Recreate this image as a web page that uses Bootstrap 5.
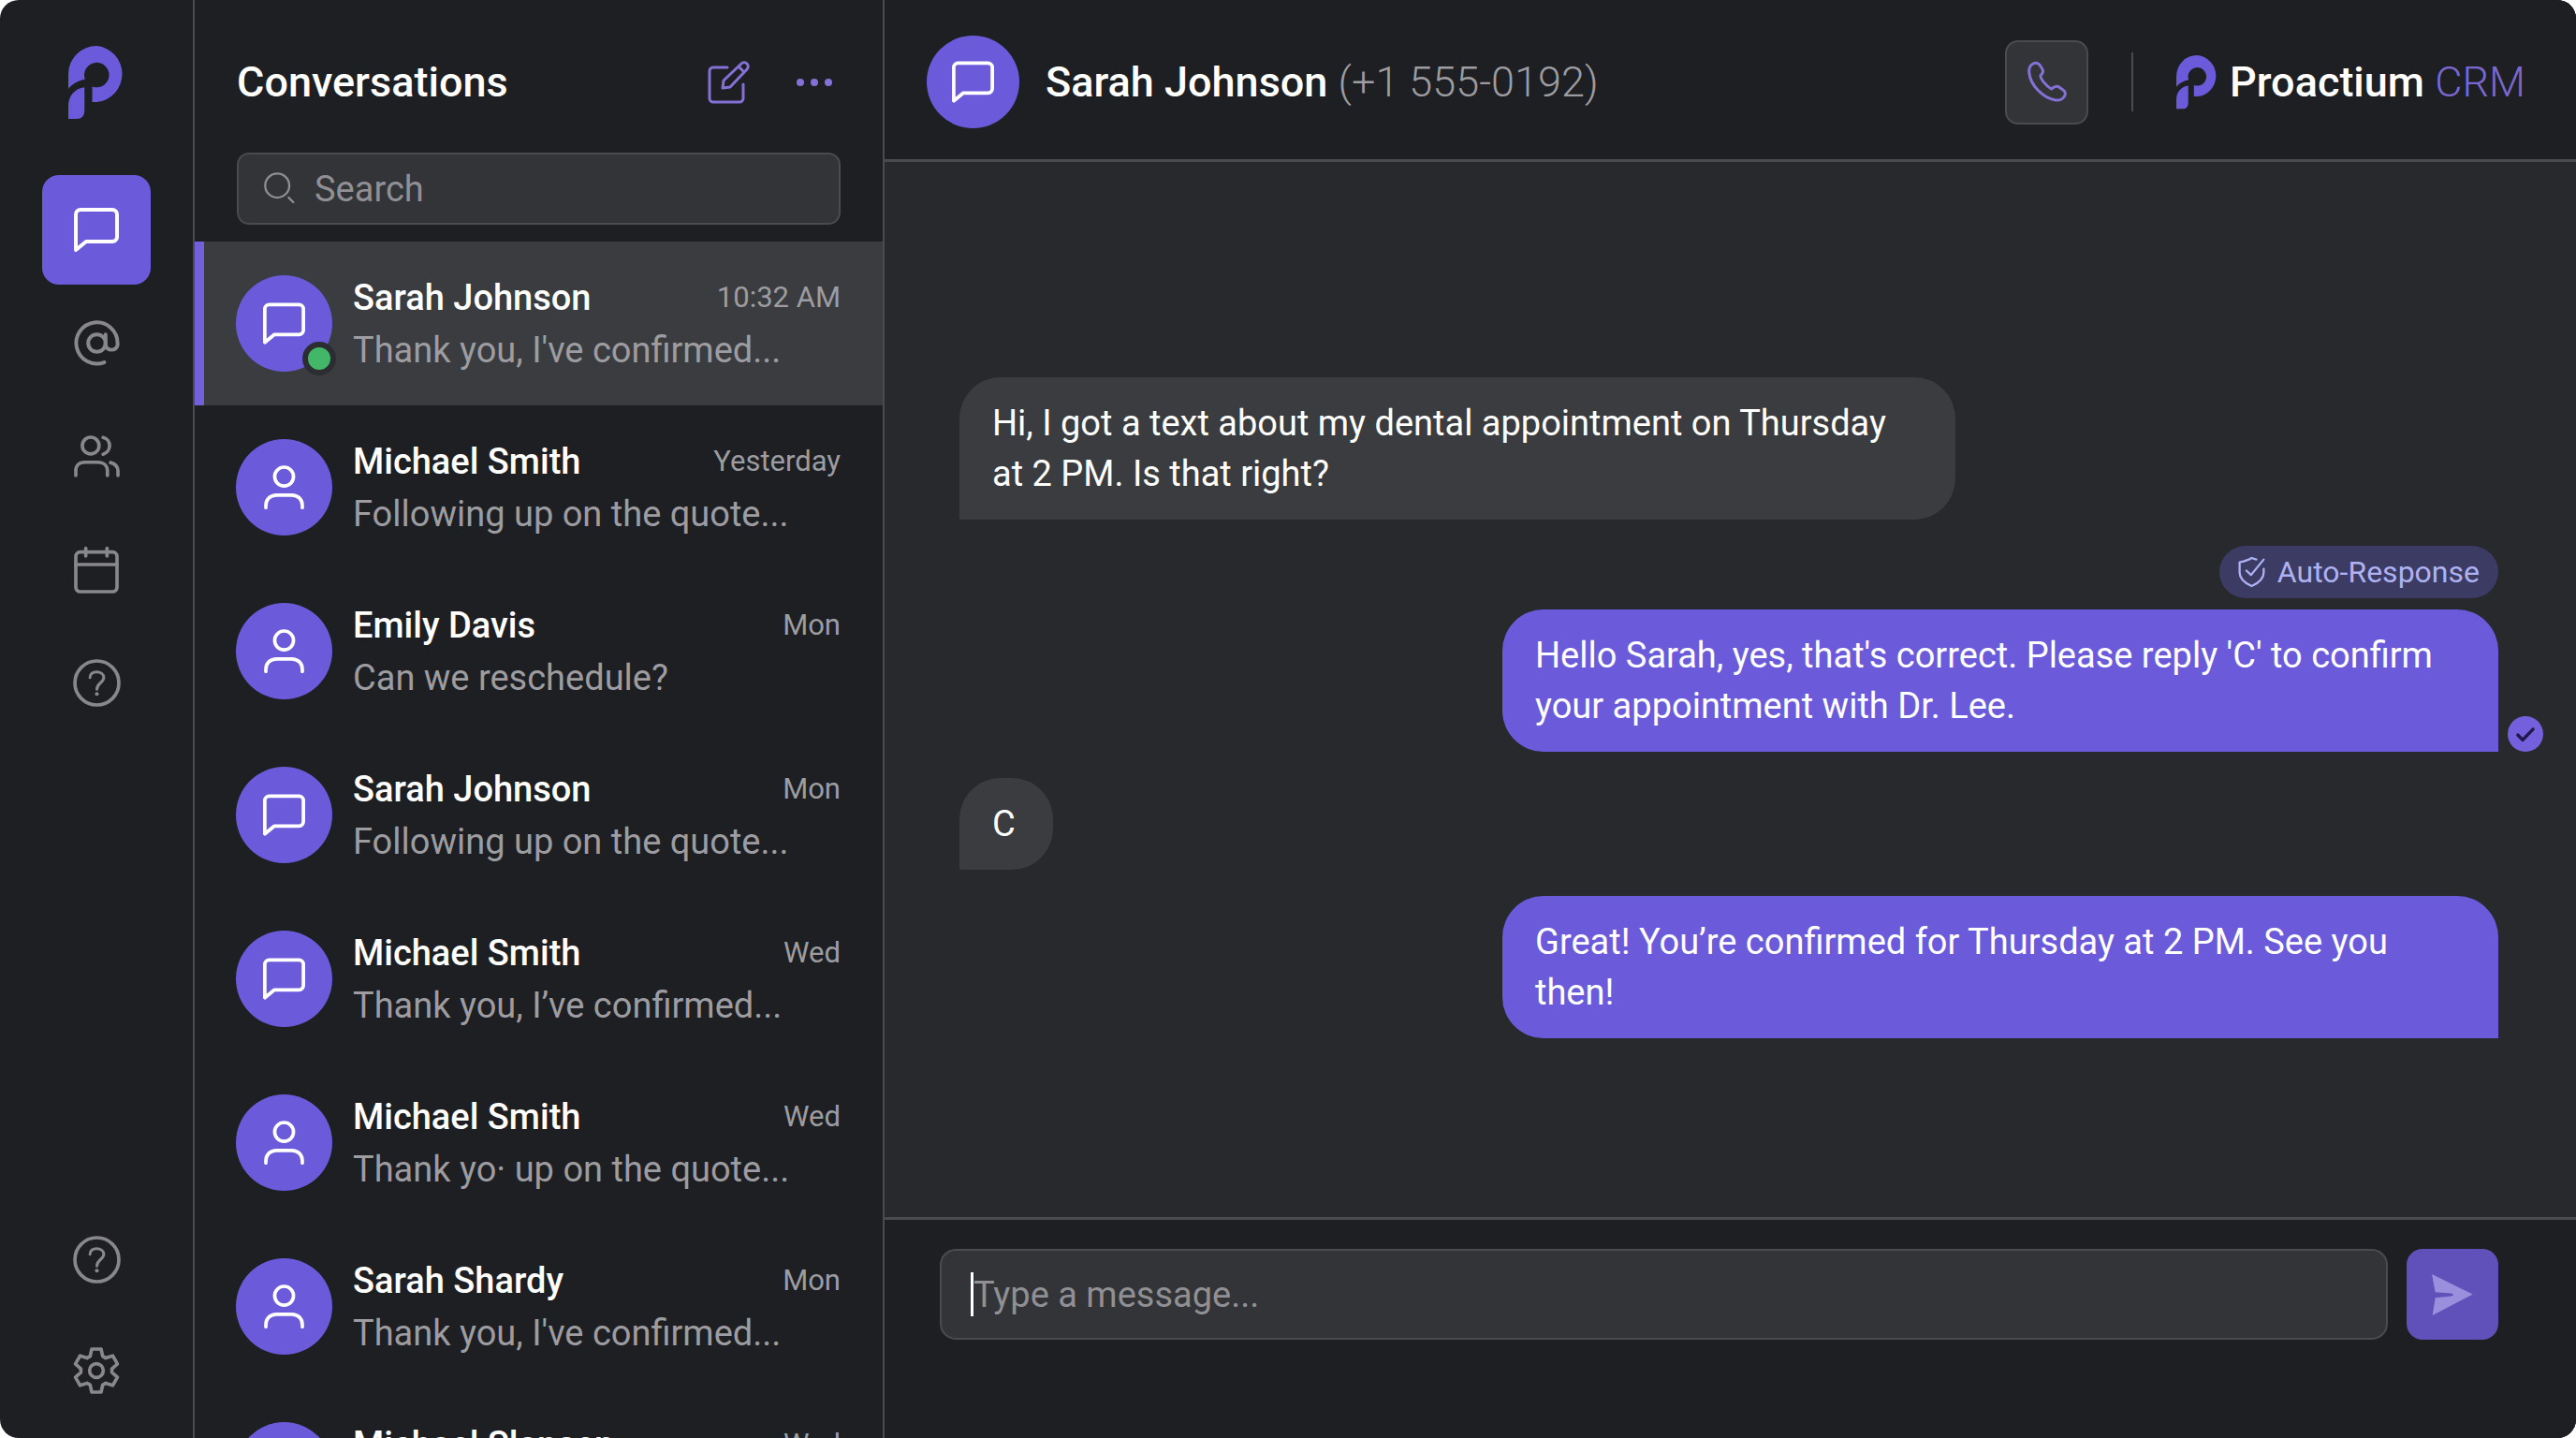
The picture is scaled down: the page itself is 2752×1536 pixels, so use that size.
<!DOCTYPE html>
<html lang="en" data-bs-theme="dark">
<head>
<meta charset="utf-8">
<meta name="viewport" content="width=device-width, initial-scale=1">
<title>Proactium CRM – Conversations</title>
<link href="https://cdn.jsdelivr.net/npm/bootstrap@5.3.0/dist/css/bootstrap.min.css" rel="stylesheet">
<style>
  :root {
    --accent: #6b5bdb;
    --accent-soft: #8571d6;
    --panel: #1e1f22;
    --canvas: #28292d;
    --field: #323438;
    --raised: #3a3c40;
    --line: #4a4b4f;
    --muted-text: #9c9ca1;
  }
  html, body { height: 100%; background: #fff; }
  body { font-family: Roboto, "Liberation Sans", sans-serif; font-size: 38px; line-height: 54px; color: #fff; overflow: hidden; }
  svg { display: block; flex: none; fill: none; stroke: currentColor; stroke-linecap: round; stroke-linejoin: round; overflow: visible; }
  .app-shell { background: var(--panel); border-radius: 20px; }

  .rail { flex: 0 0 208px; border-right: 2px solid var(--line); padding: 49px 0 14px; }
  .rail-group { gap: 4px; }
  .rail-group.mt-auto { gap: 1px; }
  .rail-link { width: 116px; height: 117px; border-radius: 18px; color: #88888c; display: flex; align-items: center; justify-content: center; }
  .rail-link.active { background: var(--accent); color: #fff; }
  .brand-mark { fill: var(--accent); stroke: none; }
  .rail .brand-mark { margin-bottom: 59px; }

  .inbox { flex: 0 0 737px; border-right: 2px solid var(--line); }
  .inbox-head { padding: 60px 45px 47px; }
  .inbox-title { font-size: 45px; line-height: 56px; font-weight: 500; }
  .tool-btn { color: var(--accent-soft); background: none; border: 0; padding: 0; }
  .search-wrap { padding: 0 45px; margin-bottom: 18px; position: relative; }
  .search-wrap svg { position: absolute; left: 74px; top: 21px; color: #8d8d92; }
  .field-box { background: var(--field); border: 2px solid var(--line); color: #fff; font-size: 38px; line-height: 54px; }
  .field-box:focus { background: var(--field); border-color: var(--line); color: #fff; box-shadow: none; }
  .field-box::placeholder { color: #8f8f94; opacity: 1; }
  .search-box { height: 77px; border-radius: 13px; padding: 0 30px 0 81px; }

  .thread { height: 175px; padding: 0 45px 0 44px; gap: 22px; color: #fff; text-decoration: none; position: relative; }
  .thread.active { background: var(--raised); }
  .thread.active::before { content: ""; position: absolute; left: -2px; top: 0; bottom: 0; width: 12px; background: #735fda; }
  .avatar { width: 103px; height: 103px; border-radius: 50%; background: var(--accent); display: flex; align-items: center; justify-content: center; flex: none; position: relative; }
  .presence { position: absolute; right: -4px; bottom: -4px; width: 36px; height: 36px; border-radius: 50%; background: #43b768; border: 6px solid #2c2d33; }
  .thread-name { font-size: 38px; line-height: 56px; font-weight: 500; }
  .thread-time { font-size: 31px; line-height: 56px; color: var(--muted-text); }
  .thread-preview { font-size: 38px; line-height: 56px; color: var(--muted-text); }

  .chat { background: var(--canvas); }
  .chat-head { background: var(--panel); height: 173px; border-bottom: 3px solid var(--line); padding: 5px 54px 0 45px; }
  .chat-head .avatar { width: 99px; height: 99px; }
  .head-text { font-size: 45px; line-height: 56px; }
  .head-name { font-weight: 500; }
  .head-phone { color: var(--muted-text); font-weight: 300; }
  .call-btn { width: 89px; height: 90px; border-radius: 14px; border: 2px solid var(--line); background: var(--field); color: var(--accent-soft); display: flex; align-items: center; justify-content: center; padding: 0; }
  .head-rule { width: 2px; height: 63px; background: var(--line); margin: 0 46px; }
  .chat-head .brand-mark { margin-right: 12px; }
  .brand-crm { color: #7a68d0; font-weight: 300; }

  .chat-log { padding: 230px 83px 0 80px; gap: 28px; }
  .bubble { max-width: 1064px; padding: 22px 40px 22px 35px; border-radius: 44px; position: relative; }
  .bubble-in { align-self: flex-start; background: var(--raised); border-bottom-left-radius: 2px; }
  .bubble-out { align-self: flex-end; background: var(--accent); border-bottom-right-radius: 0; }
  .auto-tag { align-self: flex-end; height: 56px; border-radius: 28px; padding: 0 20px; gap: 13px; margin-bottom: -16px; background: #3b3b63; color: #aeb2f2; font-size: 32px; line-height: 56px; }
  .sent-dot { position: absolute; left: calc(100% + 10px); bottom: 0; width: 38px; height: 38px; color: #1f1a4a; background: #7460dc; border-radius: 50%; }

  .composer { background: var(--panel); border-top: 3px solid var(--line); padding: 31px 83px 105px 59px; gap: 20px; }
  .composer-box { height: 97px; border-radius: 17px; padding: 0 34px; }
  .caret { position: absolute; left: 33px; top: 25px; width: 3px; height: 47px; background: #fff; }
  .send-btn { width: 98px; height: 97px; border-radius: 17px; border: 0; background: #5f50ba; color: #9a8fdd; display: flex; align-items: center; justify-content: center; padding: 0; }
</style>
<script src="https://cdn.jsdelivr.net/npm/bootstrap@5.3.0/dist/js/bootstrap.bundle.min.js"></script>
</head>
<body>

<svg width="0" height="0" class="position-absolute" aria-hidden="true">
  <symbol id="i-mark" viewBox="0 0 184 238">
    <path d="M0 138V91A91 91 0 0 1 92 0A91 91 0 0 1 92 181H77V131A40 40 0 1 0 54 108C34 112 14 121 0 138Z"/>
    <path d="M0 235V192C0 160 22 137 52 133V208C52 226 42 235 26 235Z"/>
  </symbol>
  <symbol id="i-chat" viewBox="0 0 48 48">
    <path d="M2 45V7a5 5 0 0 1 5-5H41a5 5 0 0 1 5 5V31a5 5 0 0 1-5 5H13Z" stroke-width="4"/>
  </symbol>
  <symbol id="i-person" viewBox="0 0 128 140">
    <g stroke-width="11"><circle cx="64" cy="36" r="30"/><path d="M6 135V128C6 108 20 95 40 95H88C108 95 122 108 122 128V135"/></g>
  </symbol>
  <symbol id="i-help" viewBox="0 0 152 152">
    <circle cx="76" cy="76" r="70" stroke-width="11"/>
    <path d="M54 59C54 47 63 41 75 41C88 41 98 48 98 59C98 75 76 76 76 96" stroke-width="9"/>
    <circle cx="76" cy="111" r="6" fill="currentColor" stroke="none"/>
  </symbol>
</svg>

<div class="app-shell d-flex vh-100 overflow-hidden">

  <!-- Icon rail -->
  <nav class="rail d-flex flex-column align-items-center" aria-label="Main">
    <svg class="brand-mark" width="61" height="79"><use href="#i-mark"/></svg>
    <div class="rail-group d-flex flex-column">
      <a href="#" class="rail-link active" aria-label="Messages"><svg width="48" height="48"><use href="#i-chat"/></svg></a>
      <a href="#" class="rail-link" aria-label="Mentions">
        <svg width="53" height="53" viewBox="0 0 24 24" stroke-width="1.8"><circle cx="12" cy="12" r="4.2"/><path d="M16.2 7.8V13a3 3 0 0 0 5.8 0v-1a10 10 0 1 0-6.4 9.3"/></svg>
      </a>
      <a href="#" class="rail-link" aria-label="Contacts">
        <svg width="49" height="45" viewBox="0 0 148 134" stroke-width="11"><circle cx="54" cy="32" r="27"/><path d="M6 129V114C6 96 18 86 35 86H77C96 86 108 97 108 114V129M94 6C122 12 122 52 94 60M118 87C133 91 142 100 142 114V129"/></svg>
      </a>
      <a href="#" class="rail-link" aria-label="Calendar">
        <svg width="48" height="50" viewBox="0 0 144 150" stroke-width="11"><rect x="6" y="17" width="132" height="127" rx="14"/><path d="M6 57H138M38 5V30M106 5V30"/></svg>
      </a>
      <a href="#" class="rail-link" aria-label="Help"><svg width="51" height="51"><use href="#i-help"/></svg></a>
    </div>
    <div class="rail-group d-flex flex-column mt-auto">
      <a href="#" class="rail-link" aria-label="Support"><svg width="51" height="51"><use href="#i-help"/></svg></a>
      <a href="#" class="rail-link" aria-label="Settings">
        <svg width="50" height="50" viewBox="-75 -75 150 150" stroke-width="11"><path d="M-20-46L-15-69H15L20-46L29.800-40.300L52.300-47.500L67.300-21.500L49.800-5.700V5.700L67.300 21.500L52.300 47.500L29.800 40.300L20 46L15 69H-15L-20 46L-29.800 40.300L-52.300 47.500L-67.300 21.500L-49.800 5.700V-5.700L-67.300-21.500L-52.300-47.500L-29.800-40.300Z"/><circle r="22"/></svg>
      </a>
    </div>
  </nav>

  <!-- Conversation list -->
  <section class="inbox d-flex flex-column overflow-hidden position-relative">
    <div class="inbox-head d-flex align-items-center">
      <h1 class="inbox-title m-0 me-auto">Conversations</h1>
      <button type="button" class="tool-btn me-5" aria-label="New conversation">
        <svg width="46" height="46" viewBox="0 0 46 46" stroke-width="3"><path d="M21 7H6a4 4 0 0 0-4 4V40a4 4 0 0 0 4 4H34a4 4 0 0 0 4-4V25M16 29L17 21L36 3a4 4 0 0 1 6 6L24 28ZM33 6l6 6"/></svg>
      </button>
      <button type="button" class="tool-btn me-2" aria-label="More options">
        <svg width="40" height="10" viewBox="0 0 40 10" style="fill:currentColor;stroke:none"><circle cx="5" cy="5" r="4"/><circle cx="20" cy="5" r="4"/><circle cx="35" cy="5" r="4"/></svg>
      </button>
    </div>
    <div class="search-wrap">
      <input type="search" class="form-control field-box search-box" placeholder="Search" aria-label="Search conversations">
      <svg width="33" height="33" viewBox="0 0 98 100" stroke-width="7"><circle cx="42" cy="43" r="39"/><path d="M79 82L94 97"/></svg>
    </div>

    <div class="d-flex flex-column">
      <a href="#" class="thread active d-flex align-items-center">
        <span class="avatar"><svg width="45" height="46"><use href="#i-chat"/></svg><span class="presence"></span></span>
        <span class="flex-grow-1"><span class="d-flex justify-content-between"><span class="thread-name">Sarah Johnson</span><span class="thread-time">10:32 AM</span></span><span class="thread-preview d-block">Thank you, I've confirmed...</span></span>
      </a>
      <a href="#" class="thread d-flex align-items-center">
        <span class="avatar"><svg width="43" height="47"><use href="#i-person"/></svg></span>
        <span class="flex-grow-1"><span class="d-flex justify-content-between"><span class="thread-name">Michael Smith</span><span class="thread-time">Yesterday</span></span><span class="thread-preview d-block">Following up on the quote...</span></span>
      </a>
      <a href="#" class="thread d-flex align-items-center">
        <span class="avatar"><svg width="43" height="47"><use href="#i-person"/></svg></span>
        <span class="flex-grow-1"><span class="d-flex justify-content-between"><span class="thread-name">Emily Davis</span><span class="thread-time">Mon</span></span><span class="thread-preview d-block">Can we reschedule?</span></span>
      </a>
      <a href="#" class="thread d-flex align-items-center">
        <span class="avatar"><svg width="45" height="46"><use href="#i-chat"/></svg></span>
        <span class="flex-grow-1"><span class="d-flex justify-content-between"><span class="thread-name">Sarah Johnson</span><span class="thread-time">Mon</span></span><span class="thread-preview d-block">Following up on the quote...</span></span>
      </a>
      <a href="#" class="thread d-flex align-items-center">
        <span class="avatar"><svg width="45" height="46"><use href="#i-chat"/></svg></span>
        <span class="flex-grow-1"><span class="d-flex justify-content-between"><span class="thread-name">Michael Smith</span><span class="thread-time">Wed</span></span><span class="thread-preview d-block">Thank you, I’ve confirmed...</span></span>
      </a>
      <a href="#" class="thread d-flex align-items-center">
        <span class="avatar"><svg width="43" height="47"><use href="#i-person"/></svg></span>
        <span class="flex-grow-1"><span class="d-flex justify-content-between"><span class="thread-name">Michael Smith</span><span class="thread-time">Wed</span></span><span class="thread-preview d-block">Thank yo· up on the quote...</span></span>
      </a>
      <a href="#" class="thread d-flex align-items-center">
        <span class="avatar"><svg width="43" height="47"><use href="#i-person"/></svg></span>
        <span class="flex-grow-1"><span class="d-flex justify-content-between"><span class="thread-name">Sarah Shardy</span><span class="thread-time">Mon</span></span><span class="thread-preview d-block">Thank you, I've confirmed...</span></span>
      </a>
      <a href="#" class="thread d-flex align-items-center">
        <span class="avatar"><svg width="43" height="47"><use href="#i-person"/></svg></span>
        <span class="flex-grow-1"><span class="d-flex justify-content-between"><span class="thread-name">Michael Slansen</span><span class="thread-time">Wed</span></span><span class="thread-preview d-block">Thank you, I've confirmed...</span></span>
      </a>
    </div>
  </section>

  <!-- Open conversation -->
  <main class="chat d-flex flex-column flex-grow-1">
    <header class="chat-head d-flex align-items-center">
      <span class="avatar"><svg width="45" height="46"><use href="#i-chat"/></svg></span>
      <h2 class="head-text m-0 ms-4 ps-1 me-auto"><span class="head-name">Sarah Johnson</span> <span class="head-phone">(+1 555-0192)</span></h2>
      <button type="button" class="call-btn" aria-label="Call">
        <svg width="42" height="43" viewBox="0 0 42 43" stroke-width="3"><path d="M6 2C9 .5 12 1.500 13.500 4L16 8C17.500 11 16 12.500 14 14.500C13.500 18 20 26 25.500 29C28 27 30 25.500 33 26.500L38 30C41 32 41 35 39 37.500C37 40.500 34 41.500 30 41C16 38.500 3 25 1.700 11C1.400 7 2.500 4 6 2Z"/></svg>
      </button>
      <span class="head-rule"></span>
      <a href="#" class="head-text d-flex align-items-center text-white text-decoration-none">
        <svg class="brand-mark" width="45" height="58"><use href="#i-mark"/></svg>
        <span><span class="head-name">Proactium</span> <span class="brand-crm">CRM</span></span>
      </a>
    </header>

    <div class="chat-log d-flex flex-column flex-grow-1">
      <div class="bubble bubble-in">Hi, I got a text about my dental appointment on Thursday at 2 PM. Is that right?</div>
      <div class="auto-tag d-flex align-items-center">
        <svg width="29" height="32" viewBox="0 0 86 97" stroke-width="7"><path d="M58 8L43 3C32 11 18 14 4 17V50C4 72 25 86 43 94C61 86 82 72 82 50V38M26 44L41 58L82 8"/></svg>
        <span>Auto-Response</span>
      </div>
      <div class="bubble bubble-out">Hello Sarah, yes, that's correct. Please reply 'C' to confirm your appointment with Dr. Lee.
        <svg class="sent-dot" viewBox="0 0 112 112" stroke-width="10"><path d="M32 59L47 75L80 41"/></svg>
      </div>
      <div class="bubble bubble-in">C</div>
      <div class="bubble bubble-out">Great! You’re confirmed for Thursday at 2 PM. See you then!</div>
    </div>

    <form class="composer d-flex">
      <div class="position-relative flex-grow-1">
        <input type="text" class="form-control field-box composer-box" placeholder="Type a message..." aria-label="Message">
        <span class="caret"></span>
      </div>
      <button type="button" class="send-btn" aria-label="Send">
        <svg width="44" height="44" viewBox="0 0 131 131" style="fill:currentColor;stroke:none"><path d="M0 0L130 64L2 131L11 75L62 70Q75 66 62 61L11 57Z"/></svg>
      </button>
    </form>
  </main>
</div>
</body>
</html>
